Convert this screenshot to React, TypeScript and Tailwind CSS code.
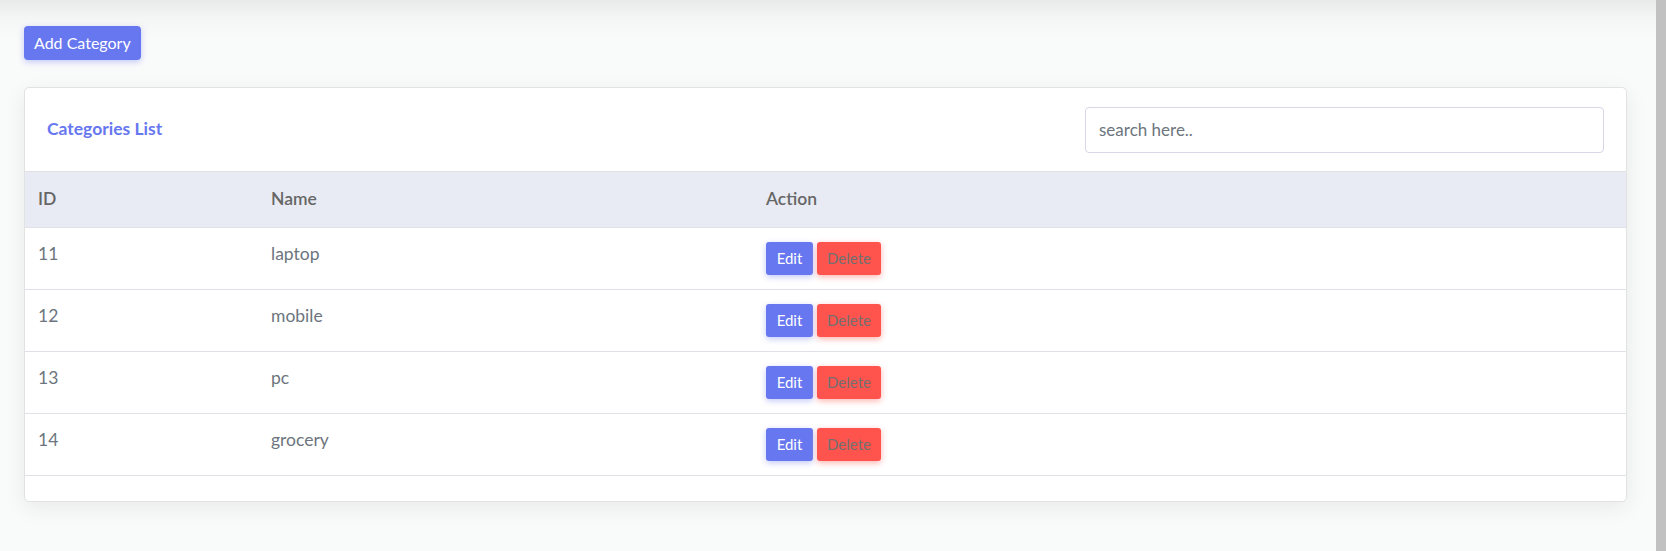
import React from "react";

const rows = [
  { id: 11, name: "laptop" },
  { id: 12, name: "mobile" },
  { id: 13, name: "pc" },
  { id: 14, name: "grocery" },
];

export default function App() {
  return (
    <div className="flex h-[551px] w-full font-['Lato',sans-serif]">
      <main className="flex-1 bg-[linear-gradient(to_bottom,#e9eaea_0px,#f4f5f5_18px,#f9fafa_40px)] px-[24px] pt-[26px] pr-[29px]">
        <button className="h-[34px] rounded-[4px] bg-[#6777ef] px-[10px] text-[16px] text-white shadow-[0_2px_6px_#c3c9f8]">
          Add Category
        </button>

        <section className="mt-[27px] rounded-[5px] border border-[#e2e2e2] bg-white shadow-[0_6px_22px_rgba(0,0,0,0.07)]">
          <div className="flex h-[84px] items-center justify-between border-b border-[#e1e1e1] pl-[22px] pr-[22px]">
            <h4 className="text-[17.5px] font-bold text-[#6777ef]">Categories List</h4>
            <input
              placeholder="search here.."
              className="h-[46px] w-[519px] rounded-[4px] border border-[#d8d6e8] px-[13px] text-[17px] text-[#495057] outline-none placeholder:text-[#6c757d]"
            />
          </div>

          <table className="w-full border-collapse text-left">
            <thead>
              <tr className="h-[55px] border-b border-[#dee2e6] bg-[#e8ebf3]">
                <th className="w-[233px] pl-[13px] text-[17.5px] font-semibold text-[#666]">ID</th>
                <th className="w-[495px] pl-[13px] text-[17.5px] font-semibold text-[#666]">Name</th>
                <th className="pl-[13px] text-[17.5px] font-semibold text-[#666]">Action</th>
              </tr>
            </thead>
            <tbody>
              {rows.map((r) => (
                <tr key={r.id} className="border-b border-[#dee2e6]">
                  <td className="py-[14px] pl-[13px] align-top text-[17.5px] leading-[24px] text-[#6c757d]">{r.id}</td>
                  <td className="py-[14px] pl-[13px] align-top text-[17.5px] leading-[24px] text-[#6c757d]">{r.name}</td>
                  <td className="py-[14px] pl-[13px] align-top">
                    <div className="flex gap-[4px]">
                      <button className="h-[33px] w-[47px] rounded-[3px] bg-[#6777ef] text-[15px] text-white shadow-[0_2px_6px_#c3c9f8]">
                        Edit
                      </button>
                      <button className="h-[33px] w-[64px] rounded-[3px] bg-[#ff544d] text-[15px] text-[#707070] shadow-[0_2px_6px_#fdb3ae]">
                        Delete
                      </button>
                    </div>
                  </td>
                </tr>
              ))}
            </tbody>
          </table>
          <div className="h-[25px]" />
        </section>
      </main>
      <div className="w-[10px] bg-[#c1c1c1]" />
    </div>
  );
}
